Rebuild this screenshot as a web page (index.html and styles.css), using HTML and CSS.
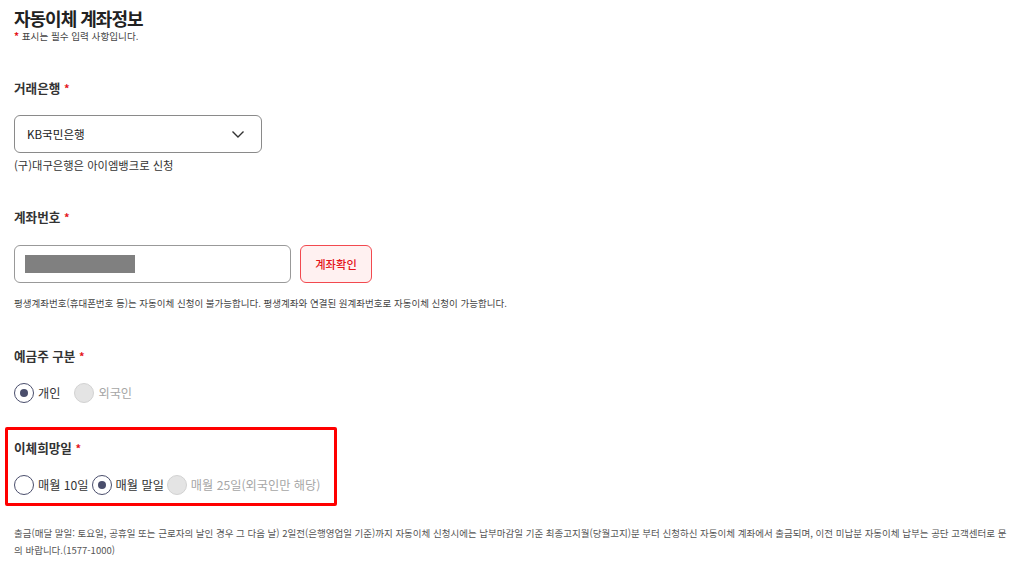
FILE: index.html
```html
<!DOCTYPE html>
<html lang="ko">
<head>
<meta charset="utf-8">
<link rel="stylesheet" href="styles.css">
</head>
<body>
<div class="page">
  <h1 class="title">자동이체 계좌정보</h1>
  <p class="req-note"><span class="star sm">*</span> 표시는 필수 입력 사항입니다.</p>

  <div class="label l-bank">거래은행 <span class="star">*</span></div>
  <div class="select">
    <span>KB국민은행</span>
    <svg class="chev" width="14" height="10" viewBox="0 0 14 10"><path d="M1.5 2.5 L7 8 L12.5 2.5" fill="none" stroke="#333" stroke-width="1.4"/></svg>
  </div>
  <p class="help">(구)대구은행은 아이엠뱅크로 신청</p>

  <div class="label l-acct">계좌번호 <span class="star">*</span></div>
  <div class="acct-row">
    <div class="input"><span class="mask"></span></div>
    <button class="btn-check">계좌확인</button>
  </div>
  <p class="notice">평생계좌번호(휴대폰번호 등)는 자동이체 신청이 불가능합니다. 평생계좌와 연결된 원계좌번호로 자동이체 신청이 가능합니다.</p>

  <div class="label l-owner">예금주 구분 <span class="star">*</span></div>
  <div class="radios gap-wide">
    <label class="radio"><span class="dot checked"></span><span class="rtext">개인</span></label>
    <label class="radio disabled"><span class="dot"></span><span class="rtext">외국인</span></label>
  </div>

  <div class="highlight-wrap">
    <div class="label l-date">이체희망일 <span class="star">*</span></div>
    <div class="radios gap-narrow">
      <label class="radio"><span class="dot"></span><span class="rtext">매월 10일</span></label>
      <label class="radio"><span class="dot checked"></span><span class="rtext">매월 말일</span></label>
      <label class="radio disabled"><span class="dot"></span><span class="rtext">매월 25일(외국인만 해당)</span></label>
    </div>
    <div class="redbox"></div>
  </div>

  <p class="bottom">출금(매달 말일: 토요일, 공휴일 또는 근로자의 날인 경우 그 다음 날) 2일전(은행영업일 기준)까지 자동이체 신청시에는 납부마감일 기준 최종고지월(당월고지)분 부터 신청하신 자동이체 계좌에서 출금되며, 이전 미납분 자동이체 납부는 공단 고객센터로 문의 바랍니다.(1577-1000)</p>
</div>
</body>
</html>
```

FILE: styles.css
```css
* { box-sizing: border-box; }
html, body { margin: 0; padding: 0; background: #fff; }
body {
  font-family: "Noto Sans CJK KR", "Noto Sans", sans-serif;
  color: #333;
}
.page {
  padding: 7px 0 0 14px;
  width: 1012px;
}
.title {
  margin: 0;
  font-size: 18px;
  line-height: 22px;
  font-weight: 700;
  color: #222;
  letter-spacing: -1px;
}
.req-note {
  margin: 1px 0 0;
  font-size: 9.6px;
  line-height: 12px;
  color: #444;
}
.star { color: #e4141b; font-weight: 700; font-size: 11px; line-height: 0; }
.star.sm { font-size: 10px; }
.label {
  font-size: 12.6px;
  line-height: 18px;
  font-weight: 700;
  color: #333;
}
.l-bank { margin-top: 37px; }
.select {
  margin-top: 18px;
  width: 248px;
  height: 38px;
  border: 1px solid #8a8a8a;
  border-radius: 6px;
  display: flex;
  align-items: center;
  justify-content: space-between;
  padding: 0 16px 0 12px;
  font-size: 11.6px;
  color: #222;
}
.chev { display: block; }
.help {
  margin: 4px 0 0;
  font-size: 11.3px;
  line-height: 16px;
  color: #333;
}
.l-acct { margin-top: 35px; }
.acct-row {
  margin-top: 19px;
  display: flex;
  gap: 9px;
}
.input {
  width: 277px;
  height: 38px;
  border: 1px solid #999;
  border-radius: 6px;
  display: flex;
  align-items: center;
  padding-left: 10px;
}
.mask {
  display: block;
  width: 110px;
  height: 18px;
  background: #808080;
}
.btn-check {
  width: 72px;
  height: 38px;
  border: 1px solid #f2494f;
  border-radius: 6px;
  background: #fff1f1;
  color: #e4141b;
  font-family: inherit;
  font-size: 11.3px;
  font-weight: 500;
  padding: 0;
}
.notice {
  margin: 13px 0 0;
  font-size: 9.5px;
  line-height: 14px;
  color: #444;
}
.l-owner { margin-top: 37px; }
.radios {
  margin-top: 18px;
  display: flex;
  align-items: center;
  height: 20px;
}
.gap-wide { gap: 14px; }
.gap-narrow { gap: 3px; }
.radio {
  display: flex;
  align-items: center;
  gap: 4px;
  font-size: 12.2px;
  color: #333;
}
.dot {
  width: 20px;
  height: 20px;
  border-radius: 50%;
  border: 1.5px solid #4a4e6c;
  background: #fff;
  position: relative;
  flex: none;
}
.dot.checked::after {
  content: "";
  position: absolute;
  left: 50%;
  top: 50%;
  width: 8px;
  height: 8px;
  margin: -4px 0 0 -4px;
  border-radius: 50%;
  background: #4a4e6c;
}
.radio.disabled .dot {
  border: 1px solid #d2d2d2;
  background: #e4e4e4;
}
.radio.disabled .rtext { color: #a6a6a6; }
.highlight-wrap { position: relative; }
.l-date { margin-top: 36px; }
.redbox {
  position: absolute;
  left: -9px;
  top: -12px;
  width: 332px;
  height: 79px;
  border: 3.5px solid #ff0000;
  border-radius: 2px;
  pointer-events: none;
}
.bottom {
  margin: 30px 0 0;
  font-size: 9.5px;
  line-height: 17px;
  color: #555;
}
```
